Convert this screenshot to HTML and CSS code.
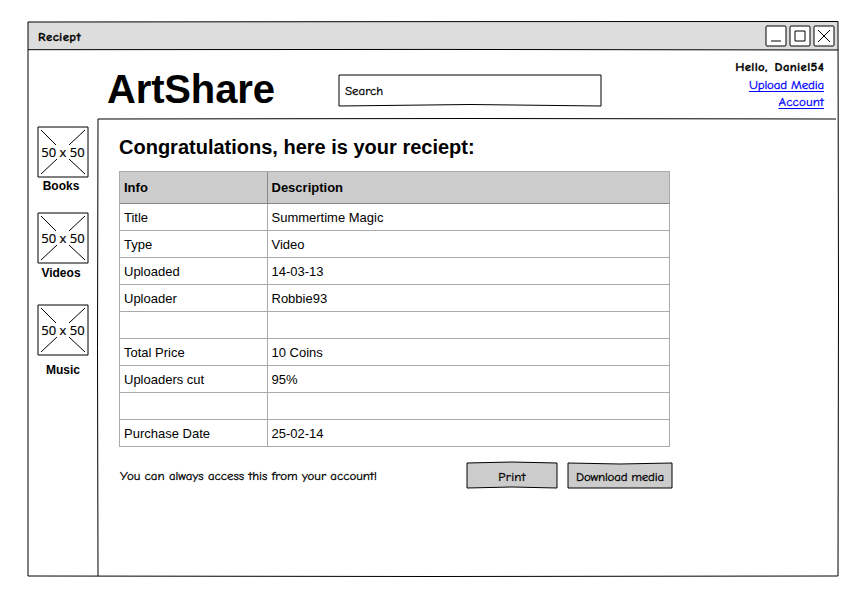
FILE: index.html
```html
<!DOCTYPE html>
<html lang="en">
<head>
<meta charset="utf-8">
<title>Reciept</title>
<link rel="stylesheet" href="styles.css">
</head>
<body>
<div class="window">
  <div class="titlebar">
    <span class="title">Reciept</span>
    <svg class="controls" width="70" height="22" viewBox="765 25 70 22">
      <g class="control-box"><rect x="766" y="26" width="20" height="20" rx="1"/><rect x="790" y="26" width="20" height="20" rx="1"/><rect x="814" y="26" width="20" height="20" rx="1"/></g>
      <path d="M771 41H781M795 31H805V41H795ZM818 30L830 42M830 30L818 42"/>
    </svg>
  </div>
  <header class="header">
    <div class="logo">ArtShare</div>
    <div class="search">
      <svg class="outline" width="262" height="31"><path d="M0 0H262V31Q131 28 0 31Z"/></svg>
      <span class="search-label">Search</span>
    </div>
    <div class="user">
      <b class="hello">Hello, Daniel54</b>
      <a class="upload" href="#">Upload Media</a>
      <a class="account" href="#">Account</a>
    </div>
  </header>
  <div class="content">
    <nav class="sidebar">
      <div class="item books">
        <div class="thumb"><svg class="outline" width="50" height="50"><path d="M0 0H50V50H0ZM3 3L18 18M47 3L31 18M3 47L19 32M47 47L31 32"/></svg><span>50 x 50</span></div>
        <b>Books</b>
      </div>
      <div class="item videos">
        <div class="thumb"><svg class="outline" width="50" height="50"><path d="M0 0H50V50H0ZM3 3L18 18M47 3L31 18M3 47L19 32M47 47L31 32"/></svg><span>50 x 50</span></div>
        <b>Videos</b>
      </div>
      <div class="item music">
        <div class="thumb"><svg class="outline" width="50" height="50"><path d="M0 0H50V50H0ZM3 3L18 18M47 3L31 18M3 47L19 32M47 47L31 32"/></svg><span>50 x 50</span></div>
        <b>Music</b>
      </div>
    </nav>
    <main class="main">
      <h1>Congratulations, here is your reciept:</h1>
      <table>
        <thead><tr><th class="info">Info</th><th>Description</th></tr></thead>
        <tbody>
          <tr><td>Title</td><td>Summertime Magic</td></tr>
          <tr><td>Type</td><td>Video</td></tr>
          <tr><td>Uploaded</td><td>14-03-13</td></tr>
          <tr><td>Uploader</td><td>Robbie93</td></tr>
          <tr><td></td><td></td></tr>
          <tr><td>Total Price</td><td>10 Coins</td></tr>
          <tr><td>Uploaders cut</td><td>95%</td></tr>
          <tr><td></td><td></td></tr>
          <tr><td>Purchase Date</td><td>25-02-14</td></tr>
        </tbody>
      </table>
      <div class="actions">
        <span class="note">You can always access this from your account!</span>
        <button class="print"><svg class="outline filled" width="90" height="25"><path d="M0 0Q45 -2 90 0V25Q45 23 0 25Z"/></svg><span>Print</span></button>
        <button class="download"><svg class="outline filled" width="104" height="25"><path d="M0 0Q52 2 104 0V25H0Z"/></svg><span>Download media</span></button>
      </div>
    </main>
  </div>
  <svg class="outline frame" width="814" height="558" viewBox="26 20 814 558">
    <path d="M28 22Q433 21.5 838 21.5Q839 299 838 576Q433 577 28 576ZM28 49.7Q433 49 838 50M98 576Q97 348 98 119Q467 118 836 119"/>
  </svg>
</div>
</body>
</html>
```
FILE: styles.css
```css
* { box-sizing: border-box; }
body { margin: 0; min-height: 607px; display: flow-root; background: #fff; color: #000; font-family: "Liberation Sans", Arial, sans-serif; }
.window { position: relative; display: flex; flex-direction: column; width: 810px; height: 554px; margin: 22px 0 0 28px; }
.outline { position: absolute; left: 0; top: 0; overflow: visible; fill: none; stroke: #000; stroke-width: 1; pointer-events: none; }
.frame { left: -2px; top: -2px; }
.filled { fill: #ccc; }
.titlebar { display: flex; justify-content: space-between; height: 28px; padding: 3px 3px 0 10px; background: #ddd; }
.title, .user, .search, .note, button { font-family: "Comic Sans MS", "Comic Neue", "Open Sans", sans-serif; font-size: 12.9px; -webkit-text-stroke: 0.3px currentColor; }
.title { font-weight: bold; line-height: 24px; letter-spacing: 0.4px; }
.controls { fill: none; stroke: #000; }
.control-box { fill: #fff; }
.header { display: flex; height: 69px; }
.logo { width: 232px; margin: 19px 0 0 79px; font-size: 40px; font-weight: bold; line-height: 40px; letter-spacing: -0.15px; }
.search { position: relative; width: 262px; height: 31px; margin-top: 25px; padding-left: 6px; line-height: 32px; }
.user { display: flex; flex-direction: column; align-items: flex-end; margin: 8px 14px 0 auto; line-height: 17px; }
.hello { height: 18px; letter-spacing: 0.3px; word-spacing: 2px; }
.user a { color: #00f; text-underline-offset: 2px; text-decoration-skip-ink: none; text-decoration-thickness: 1px; }
.upload { letter-spacing: -0.15px; }
.account { letter-spacing: 0.2px; }
.content { display: flex; flex: 1; }
.sidebar { width: 70px; padding: 8px 0 0 10px; }
.item { width: 50px; text-align: center; font-size: 12px; line-height: 16px; }
.item b { display: block; }
.thumb { position: relative; height: 50px; font: 13px/50px "Open Sans", sans-serif; -webkit-text-stroke: 0.2px currentColor; }
.books { height: 86px; }
.books b { margin: 1px 0 0 -4px; }
.videos { height: 92px; }
.videos b { margin: 2px 0 0 -4px; }
.music b { margin-top: 7px; }
.main { padding: 16px 0 0 21px; }
h1 { margin: 0; font-size: 20px; line-height: 24px; }
table { width: 551px; margin: 12px 0 0 0; border-spacing: 0; border: solid #aaa; border-width: 1px 0 0 1px; table-layout: fixed; font-size: 13px; }
th, td { height: 27px; padding: 0 4px; border: solid #aaa; border-width: 0 1px 1px 0; text-align: left; line-height: 16px; }
td { padding-top: 2px; }
th + th, td + td { padding-left: 3.5px; }
th { height: 32px; background: #ccc; border-bottom-color: #888; }
.info { width: 148px; border-right-color: #888; }
.actions { display: flex; margin-top: 16px; }
.note { width: 348px; padding-left: 1px; line-height: 26px; }
button { position: relative; height: 25px; padding: 0; border: 0; background: none; color: #000; }
button span { position: relative; line-height: 27px; }
.print { width: 90px; margin-right: 11px; }
.print span { letter-spacing: 0.3px; }
.download { width: 104px; }
.download span { letter-spacing: -0.2px; }
```
